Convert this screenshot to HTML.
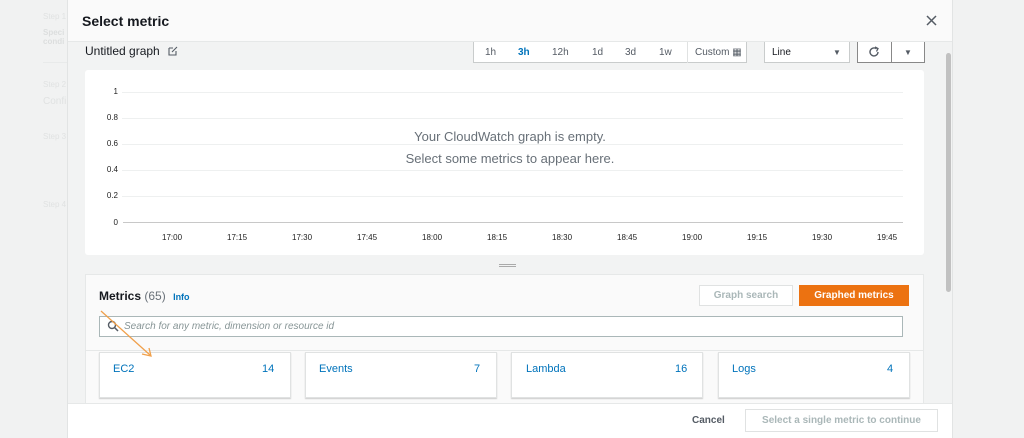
<!DOCTYPE html><html><head><style>
*{box-sizing:border-box;margin:0;padding:0}
body{width:1024px;height:438px;overflow:hidden;background:#f1f2f2;font-family:"Liberation Sans",sans-serif;position:relative}
.a{position:absolute}
.side{color:#e0e2e2;font-size:8px}
.modal{left:67px;top:0;width:886px;height:438px;background:#f2f3f3;border-left:1px solid #e2e4e4;border-right:1px solid #e2e4e4}
.hdr{left:0;top:0;width:884px;height:42px;background:#fafafa;border-bottom:1px solid #e6e8e8}
.seg{top:42px;height:21px;background:#fff;border:1px solid #c9cccc;border-top:none;font-size:10px;color:#545b64}
.seg span{position:absolute;top:5px}
.card{background:#fff;border:1px solid #e0e2e2;box-shadow:0 1px 1px #ccc}
.gl{height:1px;background:#eef0f0;left:122px;width:781px}
.yl{font-size:8px;color:#222;width:30px;text-align:right}
.xl{font-size:8px;color:#222;top:233px}
</style></head><body>
<div class="a side" style="left:43px;top:12px">Step 1</div>
<div class="a side" style="left:43px;top:28px;font-weight:bold;color:#dcdede">Speci<br>condi</div>
<div class="a side" style="left:43px;top:80px">Step 2</div>
<div class="a side" style="left:43px;top:96px;font-size:10px">Confi</div>
<div class="a side" style="left:43px;top:132px">Step 3</div>
<div class="a side" style="left:43px;top:200px">Step 4</div>
<div class="a" style="left:43px;top:62px;width:24px;height:1px;background:#e8eaea"></div>
<div class="a modal">
 <div class="a hdr"><div class="a" style="left:14px;top:13px;font-size:14px;font-weight:bold;color:#16191f">Select metric</div>
 <svg class="a" style="left:858px;top:15px" width="11" height="11"><path d="M1 1L10 10M10 1L1 10" stroke="#545b64" stroke-width="1.5"/></svg></div>
 <div class="a" style="left:17px;top:44px;font-size:12px;color:#16191f">Untitled graph</div>
 <svg class="a" style="left:100px;top:46px" width="10" height="10"><path d="M1 2H5M1 2V9H8V5M4 6L9 1" stroke="#545b64" fill="none" stroke-width="1.1"/></svg>
 <div class="a seg" style="left:405px;width:274px">
  <span style="left:11px">1h</span><span style="left:44px;color:#0073bb;font-weight:bold">3h</span><span style="left:78px">12h</span><span style="left:118px">1d</span><span style="left:151px">3d</span><span style="left:185px">1w</span>
  <div class="a" style="left:213px;top:0;width:1px;height:21px;background:#e0e2e2"></div>
  <span style="left:221px">Custom <span style="position:static;font-size:10px">▦</span></span></div>
 <div class="a seg" style="left:696px;width:86px"><span style="left:7px;color:#16191f">Line</span><span style="left:68px;font-size:8px;top:6px">▼</span></div>
 <div class="a seg" style="left:789px;width:68px;border-color:#888">
  <svg class="a" style="left:10px;top:4px" width="12" height="12"><path d="M10 6A4 4 0 1 1 8.5 2.8" stroke="#545b64" fill="none" stroke-width="1.4"/><path d="M7 1L10 2.5L8.5 5.5" stroke="#545b64" fill="none" stroke-width="1.3"/></svg>
  <div class="a" style="left:33px;top:0;width:1px;height:21px;background:#888"></div><span style="left:46px;font-size:8px;top:6px">▼</span></div>
 <div class="a" style="left:878px;top:53px;width:5px;height:239px;background:#c1c1c1;border-radius:3px"></div>
</div>
<div class="a" style="left:85px;top:70px;width:839px;height:185px;background:#fff;border-radius:3px"></div>
<div class="a gl" style="top:92px"></div><div class="a gl" style="top:118px"></div><div class="a gl" style="top:144px"></div><div class="a gl" style="top:170px"></div><div class="a gl" style="top:196px"></div>
<div class="a" style="left:123px;top:222px;width:780px;height:1px;background:#c8c8c8"></div>
<div class="a yl" style="left:88px;top:87px">1</div><div class="a yl" style="left:88px;top:113px">0.8</div><div class="a yl" style="left:88px;top:139px">0.6</div><div class="a yl" style="left:88px;top:165px">0.4</div><div class="a yl" style="left:88px;top:191px">0.2</div><div class="a yl" style="left:88px;top:218px">0</div>
<div class="a xl" style="left:162px">17:00</div><div class="a xl" style="left:227px">17:15</div><div class="a xl" style="left:292px">17:30</div><div class="a xl" style="left:357px">17:45</div><div class="a xl" style="left:422px">18:00</div><div class="a xl" style="left:487px">18:15</div><div class="a xl" style="left:552px">18:30</div><div class="a xl" style="left:617px">18:45</div><div class="a xl" style="left:682px">19:00</div><div class="a xl" style="left:747px">19:15</div><div class="a xl" style="left:812px">19:30</div><div class="a xl" style="left:877px">19:45</div>
<div class="a" style="left:300px;top:126px;width:420px;text-align:center;font-size:13px;color:#687078;line-height:22px">Your CloudWatch graph is empty.<br>Select some metrics to appear here.</div>
<div class="a" style="left:499px;top:264px;width:17px;height:3px;border-top:1px solid #aaa;border-bottom:1px solid #aaa"></div>
<div class="a" style="left:85px;top:274px;width:839px;height:130px;background:#fafafa;border:1px solid #e6e8e8"></div>
<div class="a" style="left:99px;top:289px;font-size:12px;color:#16191f"><b>Metrics</b> <span style="color:#687078">(65)</span> <span style="font-size:9px;color:#0073bb;font-weight:bold;margin-left:4px">Info</span></div>
<div class="a" style="left:699px;top:285px;width:94px;height:21px;background:#fff;border:1px solid #e0e2e2;font-size:10px;color:#aab7b8;font-weight:bold;text-align:center;line-height:19px">Graph search</div>
<div class="a" style="left:799px;top:285px;width:110px;height:21px;background:#ec7211;font-size:10px;color:#fff;font-weight:bold;text-align:center;line-height:21px">Graphed metrics</div>
<div class="a" style="left:99px;top:316px;width:804px;height:21px;background:#fff;border:1px solid #aab7b8;font-size:10px;color:#879596;font-style:italic;padding:4px 0 0 24px">Search for any metric, dimension or resource id</div>
<svg class="a" style="left:107px;top:320px" width="12" height="12"><circle cx="5" cy="5" r="3.5" stroke="#545b64" fill="none" stroke-width="1.4"/><path d="M7.5 7.5L11 11" stroke="#545b64" stroke-width="1.5"/></svg>
<div class="a" style="left:86px;top:350px;width:838px;height:1px;background:#e6e8e8"></div>
<div class="a card" style="left:99px;top:352px;width:192px;height:46px"></div>
<div class="a card" style="left:305px;top:352px;width:192px;height:46px"></div>
<div class="a card" style="left:511px;top:352px;width:192px;height:46px"></div>
<div class="a card" style="left:718px;top:352px;width:192px;height:46px"></div>
<div class="a" style="left:113px;top:363px;font-size:11px;color:#0073bb">EC2</div><div class="a" style="left:262px;top:363px;font-size:11px;color:#0073bb">14</div>
<div class="a" style="left:319px;top:363px;font-size:11px;color:#0073bb">Events</div><div class="a" style="left:474px;top:363px;font-size:11px;color:#0073bb">7</div>
<div class="a" style="left:526px;top:363px;font-size:11px;color:#0073bb">Lambda</div><div class="a" style="left:675px;top:363px;font-size:11px;color:#0073bb">16</div>
<div class="a" style="left:732px;top:363px;font-size:11px;color:#0073bb">Logs</div><div class="a" style="left:887px;top:363px;font-size:11px;color:#0073bb">4</div>
<svg class="a" style="left:95px;top:305px" width="70" height="60"><line x1="6" y1="6" x2="55" y2="50" stroke="#f0a04b" stroke-width="1.3"/><path d="M47 49 L56 51 L54 43" fill="none" stroke="#f0a04b" stroke-width="1.3"/></svg>
<div class="a" style="left:68px;top:403px;width:884px;height:35px;background:#fff;border-top:1px solid #e6e8e8"></div>
<div class="a" style="left:692px;top:415px;font-size:10px;font-weight:bold;color:#545b64">Cancel</div>
<div class="a" style="left:745px;top:409px;width:193px;height:23px;border:1px solid #e0e2e2;font-size:10px;font-weight:bold;color:#aab7b8;text-align:center;line-height:21px">Select a single metric to continue</div>
</body></html>
